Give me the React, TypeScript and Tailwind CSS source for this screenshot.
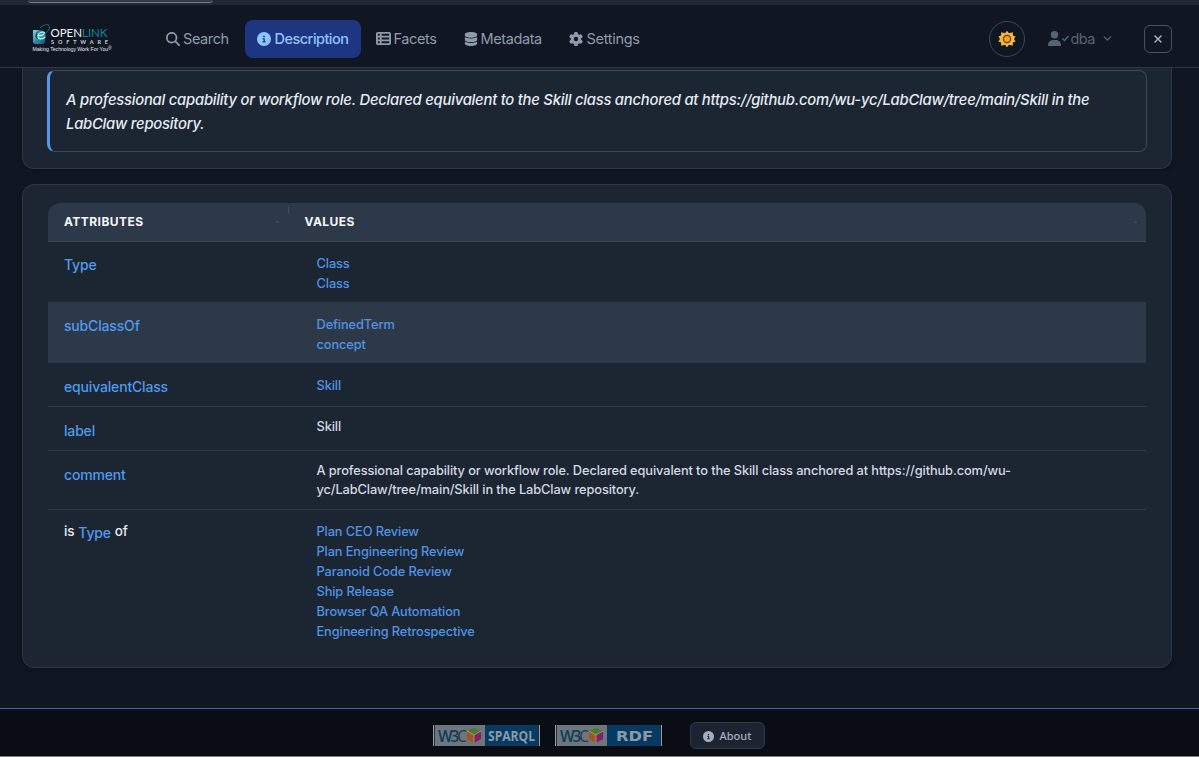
import React from "react";
import {
  FaDatabase,
  FaGear,
  FaMagnifyingGlass,
  FaCircleInfo,
  FaTableList,
  FaUser,
} from "react-icons/fa6";
import { ChevronDown, X } from "lucide-react";

type Row = {
  name: string;
  reverse?: boolean;
  links?: string[];
  text?: string;
  className: string;
};

const description =
  "A professional capability or workflow role. Declared equivalent to the Skill class anchored at https://github.com/wu-yc/LabClaw/tree/main/Skill in the LabClaw repository.";

const rows: Row[] = [
  { name: "Type", links: ["Class", "Class"], className: "h-[60px] -mt-px mb-px" },
  {
    name: "subClassOf",
    links: ["DefinedTerm", "concept"],
    className: "h-[61px] bg-[#2d3848]",
  },
  { name: "equivalentClass", links: ["Skill"], className: "h-11 border-b" },
  { name: "label", text: "Skill", className: "h-11 border-b" },
  { name: "comment", text: description, className: "h-[59px] border-b" },
  {
    name: "Type",
    reverse: true,
    links: [
      "Plan CEO Review",
      "Plan Engineering Review",
      "Paranoid Code Review",
      "Ship Release",
      "Browser QA Automation",
      "Engineering Retrospective",
    ],
    className: "h-[140px]",
  },
];

const Logo = () => (
  <svg
    width="82"
    height="32"
    viewBox="0 0 82 32"
    className="mt-[5px] shrink-0 overflow-visible"
    aria-label="OpenLink Software"
  >
    <defs>
      <linearGradient id="mark" x1="0" y1="0" x2="1" y2="1">
        <stop offset="0" stopColor="#7fd5df" />
        <stop offset="0.5" stopColor="#2b93a8" />
        <stop offset="1" stopColor="#12566d" />
      </linearGradient>
    </defs>
    <path
      d="M1 5h7c-4 2-5 5-4 7.5 2 2.5 6 1.500 9-1.500v6.500L11 19H3l-2-1.500z"
      fill="url(#mark)"
    />
    <circle cx="9" cy="10" r="4.5" fill="#2f9bb0" />
    <path
      d="M5.5 10.5c3.5.5 7-.5 7-3-2-1.5-6.5.5-6.5 4 0 3 4.5 3.3 7.5.3"
      fill="none"
      stroke="#c5f2f5"
      strokeWidth="1.1"
    />
    <path
      d="M8 3c4-4 9.5-4.5 9.5-1.2C17.5 5 15 7.5 12.5 9"
      fill="none"
      stroke="#25717f"
      strokeWidth="0.9"
    />
    <text x="18.5" y="11.5" fontFamily="Lato" fontSize="12" fill="#f0f3f5" textLength="57" lengthAdjust="spacingAndGlyphs">
      OPEN<tspan fill="#16879b">LINK</tspan>
    </text>
    <text x="19" y="19" fontFamily="Lato" fontWeight="700" fontSize="5.5" fill="#c8ced5" textLength="57">
      SOFTWARE
    </text>
    <text x="0.5" y="26" fontFamily="Liberation Sans" fontSize="5.2" fill="#e3e7ec" letterSpacing="-0.05">
      Making Technology Work For You
      <tspan fontSize="5" dy="-1.5">
        ®
      </tspan>
    </text>
  </svg>
);

const Badge = ({ label }: { label: string }) => (
  <svg
    width="107"
    height="21"
    viewBox="0 0 107 21"
    className="-mt-px overflow-visible"
    aria-label={`W3C ${label}`}
  >
    <rect width="107" height="21" fill="#063a63" />
    <rect width="52" height="21" fill="#6d767c" />
    <path d="M.5 0v21M106.5 0v21" stroke="#969da1" />
    <path d="M1.5 0v21M105.5 0v21" stroke="#20303b" />
    <text x="5" y="16.5" fontFamily="Open Sans" fontWeight="600" fontSize="17" letterSpacing="-2.2" fill="#0c3d5f" textLength="27" lengthAdjust="spacingAndGlyphs">
      W3<tspan fontWeight="400" fill="#2f373d">C</tspan>
    </text>
    <path d="m41 3 7 3-7 4-7-4z" fill="#477b27" />
    <path d="m34 6 7 4v8l-7-4z" fill="#a45420" />
    <path d="m48 6-7 4v8l7-4z" fill="#831f68" />
    <path d="m34 6 7 4 7-4M41 10v8" stroke="#a5a5a5" strokeWidth=".8" fill="none" />
    {label === "SPARQL" ? (
      <text x="55" y="16" fontFamily="Open Sans" fontWeight="700" fontSize="14" fill="#8d9aa4" textLength="47" lengthAdjust="spacingAndGlyphs">
        SPARQL
      </text>
    ) : (
      <text x="61" y="16" fontFamily="DejaVu Sans" fontWeight="700" fontSize="14" fill="#8d9aa4" textLength="37" lengthAdjust="spacingAndGlyphs">
        RDF
      </text>
    )}
  </svg>
);

const Sun = () => (
  <svg width="18" height="18" viewBox="0 0 18 18" aria-hidden>
    <path
      d="m9 .8 2 2.5 3.8-1.1.1 3.2 2.7 1.2L16 9l1.6 2.5-2.7 1.1-.1 3.2-3.8-1.1L9 17.2l-2-2.5-3.8 1.1-.1-3.2-2.7-1.1L2 9 .4 6.6l2.7-1.2.1-3.2L7 3.3z"
      fill="#f6b73e"
    />
    <circle cx="9" cy="9" r="3.6" fill="#f9a01f" stroke="#5a3c18" strokeWidth="1.2" />
  </svg>
);

const SortMark = ({ className }: { className: string }) => (
  <svg width="5" height="3" viewBox="0 0 5 3" className={className} aria-hidden>
    <path d="M0 3 2.5 0 5 3z" fill="#3b495b" />
  </svg>
);

const Header = () => (
  <header className="flex h-[63px] shrink-0 items-center border-b border-[#2d3748] bg-[#101722] pl-8 pr-[27px] pt-[5px]">
    <Logo />
    <nav className="ml-[51.5px] flex flex-1 items-center text-[14.5px] tracking-[-0.4px] text-[#8f9bad]">
      <a className="flex w-[79px] items-center gap-[3.5px]">
        <FaMagnifyingGlass size={14} />
        Search
      </a>
      <a className="flex h-[38px] w-[116px] items-center justify-center gap-1 rounded-lg bg-[#1e3582] font-medium tracking-[-0.52px] text-[#8ec5ff]">
        <FaCircleInfo size={14} />
        Description
      </a>
      <a className="ml-[15px] flex w-[88px] items-center gap-[3px]">
        <FaTableList size={15} />
        Facets
      </a>
      <a className="flex w-[105px] items-center gap-[3px]">
        <FaDatabase size={14} />
        Metadata
      </a>
      <a className="flex items-center gap-1 tracking-[-0.3px]">
        <FaGear size={14} />
        Settings
      </a>
    </nav>
    <div className="flex items-center">
      <button type="button" className="flex size-9 items-center justify-center rounded-full border border-[#3c4656]">
        <Sun />
      </button>
      <div className="ml-[22px] flex items-center text-[14.5px] tracking-[-0.5px] text-[#566376]">
        <FaUser size={15} />
        <svg width="7" height="7" viewBox="0 0 7 7" className="-mt-px mr-px" aria-hidden>
          <path d="m.5 3.5 2 2 4-4.5" fill="none" stroke="currentColor" strokeWidth="1.4" />
        </svg>
        dba
        <ChevronDown size={13} strokeWidth={2.5} className="ml-[6px]" />
      </div>
      <button type="button" className="ml-[30px] flex size-7 items-center justify-center rounded-md border border-[#465163] text-[#a6b1c1]">
        <X size={12} strokeWidth={3} />
      </button>
    </div>
  </header>
);

const AttributeRow = ({ row }: { row: Row }) => (
  <div className={`flex border-[#2d3848] ${row.className}`}>
    <div className="w-[268.5px] shrink-0 pl-4 pt-[14px] text-[14px] font-medium leading-5 tracking-[-0.17px] text-[#4f9bee]">
      {row.reverse ? (
        <div className="flex gap-1">
          <span className="-mt-[3px] text-[13.5px] text-[#e6ebf1]">is</span>
          <span className="-mt-px">{row.name}</span>
          <span className="-mt-[3px] text-[13.5px] text-[#e6ebf1]">of</span>
        </div>
      ) : (
        row.name
      )}
    </div>
    <div
      className={`text-[12.8px] font-medium leading-5 tracking-[-0.11px] ${
        row.reverse ? "pt-3" : "pt-[13px]"
      }`}
    >
      {row.links?.map((link, i) => (
        <a key={i} className="block text-[#4f94e4]">
          {link}
        </a>
      ))}
      {row.text && (
        <p className="-mt-[3px] w-[720px] leading-[19px] tracking-[-0.1px] text-[#d3dae3]">
          {row.text}
        </p>
      )}
    </div>
  </div>
);

const App = () => {
  return (
    <div className="flex h-[757px] flex-col overflow-hidden bg-[#101722] font-['Inter',sans-serif]">
      <div className="h-[5px] shrink-0 bg-[#222734]">
        <div className="ml-7 h-[3px] w-[185px] rounded-b-full border-b border-[#777a80] bg-[#353945]" />
      </div>
      <Header />

      <main className="flex-1 px-[22px] pr-[27px]">
        <section className="h-[101px] rounded-b-xl border border-t-0 border-[#2d3748] bg-[#1c2532] px-6 pt-[2px] shadow-md">
          <blockquote className="h-[82px] rounded-lg border border-l-3 border-[#3d4858] border-l-[#559bed] px-4 pt-[17px] text-[14.8px] font-medium italic leading-6 tracking-[-0.23px] text-[#e6ecf3]">
            {description}
          </blockquote>
        </section>

        <section className="mt-[15px] h-[484px] rounded-xl border border-[#2d3748] bg-[#1c2532] px-[25px] pt-[18px] shadow-md">
          <div className="flex h-[39px] rounded-t-xl border-b border-[#3a4655] bg-[#2d3848] pl-4 pr-2 text-[12px] font-bold leading-[37px] tracking-[0.45px] text-[#f5f7fa]">
            <div className="flex w-[240.5px]">
              ATTRIBUTES
              <SortMark className="ml-auto mt-[17px]" />
              <span className="ml-2 mr-4 mt-1 h-[7px] w-px bg-[#3f4d5f]" />
            </div>
            <div>VALUES</div>
            <SortMark className="ml-auto mt-[17px]" />
          </div>
          {rows.map((row, i) => (
            <AttributeRow key={i} row={row} />
          ))}
        </section>
      </main>

      <footer className="flex h-[49px] shrink-0 items-center justify-center border-b border-t border-b-[#7c7e81] border-t-[#376bb0] bg-[#0a0e14] pr-0.5 pt-1.5">
        <div className="flex items-center">
          <Badge label="SPARQL" />
          <div className="ml-[15px]">
            <Badge label="RDF" />
          </div>
          <button type="button" className="ml-7 flex h-[27px] w-[75px] items-center justify-center gap-1.5 rounded-md border border-[#303a4a] bg-[#1c2432] pt-px font-['Noto_Sans',sans-serif] text-[11px] font-medium text-[#a4afbf]">
            <FaCircleInfo size={11} />
            About
          </button>
        </div>
      </footer>
    </div>
  );
};

export default App;
